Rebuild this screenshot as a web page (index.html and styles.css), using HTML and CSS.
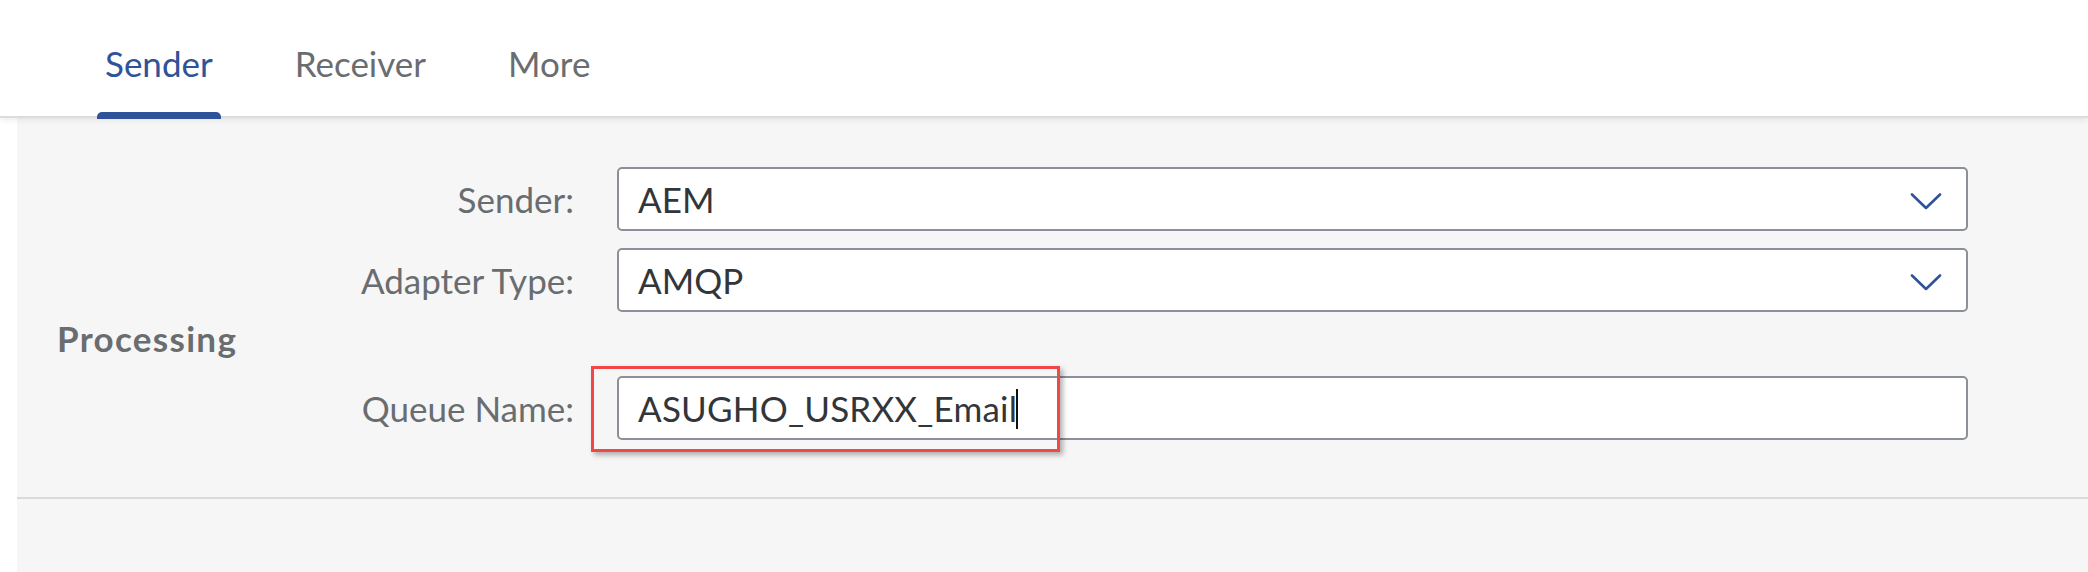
FILE: index.html
```html
<!DOCTYPE html>
<html lang="en">
<head>
<meta charset="utf-8">
<title>Sender</title>
<link rel="stylesheet" href="styles.css">
</head>
<body>
<header class="tabbar">
  <nav class="tabs">
    <div class="tab tab-active">Sender</div>
    <div class="tab">Receiver</div>
    <div class="tab">More</div>
  </nav>
</header>
<main class="content">
  <div class="form">
    <div class="row">
      <label class="label">Sender:</label>
      <div class="field select">
        <span class="value">AEM</span>
        <svg class="chevron" width="32" height="17" viewBox="0 0 32 17"><polyline points="2,1.5 16,15 30,1.5" fill="none" stroke="#2f5399" stroke-width="2.6" stroke-linecap="round" stroke-linejoin="round"/></svg>
      </div>
    </div>
    <div class="row">
      <label class="label">Adapter Type:</label>
      <div class="field select">
        <span class="value">AMQP</span>
        <svg class="chevron" width="32" height="17" viewBox="0 0 32 17"><polyline points="2,1.5 16,15 30,1.5" fill="none" stroke="#2f5399" stroke-width="2.6" stroke-linecap="round" stroke-linejoin="round"/></svg>
      </div>
    </div>
    <h2 class="group-title">Processing</h2>
    <div class="row">
      <label class="label">Queue Name:</label>
      <div class="field-wrap">
        <div class="field">
          <span class="value value-wide">ASUGHO_USRXX_Email</span><span class="caret"></span>
        </div>
        <div class="highlight"></div>
      </div>
    </div>
  </div>
  <div class="divider"></div>
</main>
</body>
</html>
```

FILE: styles.css
```css
html, body {
  margin: 0;
  padding: 0;
  background: #ffffff;
  font-family: Lato, "Open Sans", Arial, sans-serif;
}

.tabbar {
  height: 116px;
  background: #ffffff;
  border-bottom: 2px solid #dcdcdc;
  box-shadow: 0 2px 6px rgba(0, 0, 0, 0.08);
  position: relative;
  z-index: 2;
}

.tabs {
  display: flex;
  gap: 66px;
  padding-left: 97px;
  height: 100%;
}

.tab {
  position: relative;
  padding: 42px 8px 0 8px;
  font-size: 35px;
  line-height: 42px;
  color: #6a6d70;
}

.tab-active {
  color: #2f5399;
}

.tab-active::after {
  content: "";
  position: absolute;
  left: 0;
  right: 0;
  bottom: -3px;
  height: 7px;
  background: #2f5399;
  border-radius: 5px 5px 0 0;
}

.content {
  margin-left: 17px;
  background: #f6f6f6;
  height: calc(100vh - 118px);
  overflow: hidden;
}

.form {
  padding-top: 49px;
  display: flex;
  flex-direction: column;
}

.row {
  display: grid;
  grid-template-columns: 557px 1351px;
  column-gap: 43px;
  align-items: center;
  margin-bottom: 17px;
}

.label {
  text-align: right;
  font-size: 35px;
  line-height: 42px;
  color: #6a6d70;
}

.field-wrap {
  position: relative;
}

.field {
  box-sizing: border-box;
  height: 64px;
  background: #ffffff;
  border: 2px solid #8b9098;
  border-radius: 5px;
  display: flex;
  align-items: center;
  padding: 0 24px 0 19px;
}

.value {
  font-size: 35px;
  line-height: 42px;
  color: #32363a;
}

.value-wide {
  letter-spacing: 0.2px;
}

.select {
  justify-content: space-between;
}

.chevron {
  display: block;
  margin-top: 5px;
}

.caret {
  display: inline-block;
  width: 2px;
  height: 40px;
  background: #111111;
  margin-left: -1px;
  margin-top: 2px;
}

.highlight {
  position: absolute;
  left: -26px;
  top: -10px;
  width: 469px;
  height: 86px;
  box-sizing: border-box;
  border: 3px solid #f04848;
  box-shadow: 3px 3px 5px rgba(0, 0, 0, 0.3);
  pointer-events: none;
}

.group-title {
  margin: -12px 0 17px 40px;
  font-size: 35px;
  line-height: 42px;
  font-weight: 700;
  letter-spacing: 1.3px;
  color: #6a6d70;
}

.form .row:last-child {
  margin-bottom: 0;
}

.divider {
  margin-top: 57px;
  height: 2px;
  background: #dadada;
}
```
